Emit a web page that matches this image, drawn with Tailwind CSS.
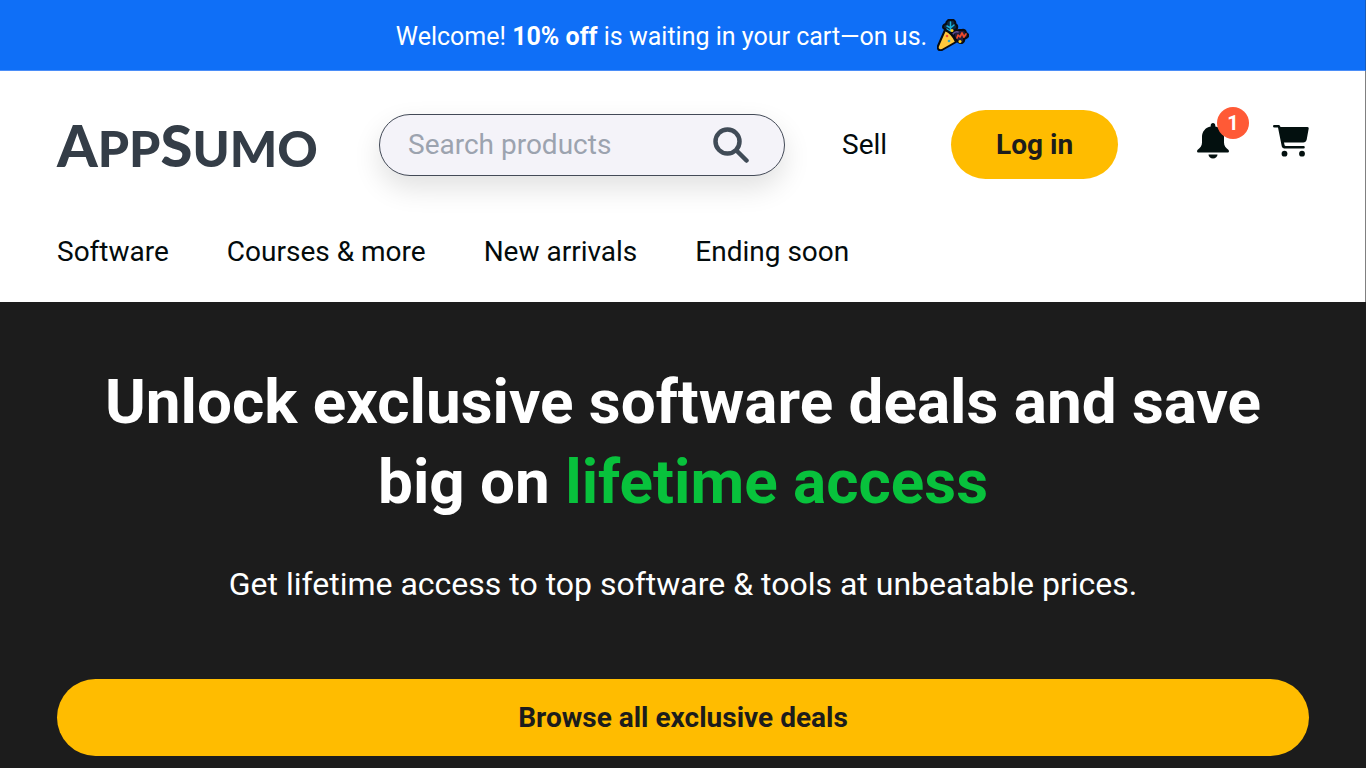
<!DOCTYPE html>
<html lang="en">
	<head>
		<meta charset="UTF-8" />
		<meta name="viewport" content="width=device-width, initial-scale=1" />
		<title>AppSumo</title>
		<script src="https://cdn.jsdelivr.net/npm/@tailwindcss/browser@4"></script>
	</head>
	<body class="min-h-screen overflow-hidden bg-[#1c1c1c] font-['Roboto',sans-serif]">
		<div class="flex h-[71px] items-center justify-center gap-2.5 border-r border-b border-r-[#145bbd] border-b-[#4b8ef8] bg-[#0f6ff7] text-white">
			<p class="pt-1 text-[25px] leading-8">Welcome! <b>10% off</b> is waiting in your cart—on us.</p>
			<svg class="size-8" viewBox="0 0 32 32" fill="none" stroke="#080b12" stroke-width="2" stroke-linejoin="round" stroke-linecap="round" aria-hidden="true">
				<path d="M11 12c0-2-5-1-5-4 0-2 2-3 3-3 0-3 3-5 5-4 3-1 5 2 4 4 3 1 3 5 0 6l-3 3z" fill="#0b2942" />
				<path d="M13.500 3v9M10 7l3.500 2L17 6M10 10l3 2" stroke="#1bb0d8" stroke-width="1.500" />
				<path d="M17 18c-1-4 1-7 5-7l3 0c2-1 4 1 4 3 3 1 3 4 0 5l-2 1c1 4-3 5-6 3z" fill="#25203d" />
				<path d="M16 15q2-3 5-2" stroke="#604d93" stroke-width="1.500" />
				<path d="M20 19l1-3 2 2 2-4 2 4 2-3" stroke="#f04a2c" stroke-width="1.700" />
				<path d="M8 11 1 27c-1 3 1 5 4 4l14-8c-2-5-6-10-11-12Z" fill="#ffc83d" />
				<g stroke="none">
					<circle cx="10" cy="17" r="1.300" fill="#ee5035" />
					<circle cx="12" cy="22" r="1.300" fill="#32a7b8" />
					<circle cx="15" cy="11.500" r="1.500" fill="#ffd21f" />
					<circle cx="23" cy="22.500" r="1.500" fill="#ffd21f" />
				</g>
			</svg>
		</div>

		<header class="border-r border-[#808080] bg-white pt-[39px] pr-14 pb-8 pl-[57px] text-[#030b0c]">
			<div class="flex items-center">
				<a href="#" class="h-[69px] w-[322px] shrink-0 font-['Lato',sans-serif] text-[50px] leading-[69px] font-black text-[#343d47]"><span class="text-[58px]">A</span>PP<span class="text-[58px]">S</span>UMO</a>
				<form class="flex h-[62px] w-[406px] items-center rounded-full border border-[#434a57] bg-[#f4f3f9] pr-[35px] pl-7 shadow-[0_12px_28px_rgba(0,0,0,0.12)]">
					<input type="search" aria-label="Search products" placeholder="Search products" class="min-w-0 flex-1 text-[28px] leading-9 outline-none placeholder:text-[#9ca3af]" />
					<button type="submit" aria-label="Search">
						<svg class="size-9" viewBox="0 0 36 36" fill="none" stroke="#404b57" stroke-width="4.5" stroke-linecap="round">
							<circle cx="14.5" cy="14.5" r="12" />
							<path d="m24 24 9.5 9.5" />
						</svg>
					</button>
				</form>
				<a href="#" class="ml-[57px] text-[28px] leading-9">Sell</a>
				<button type="button" class="ml-16 h-[69px] w-[167px] rounded-full bg-[#ffbc00] text-[28px] font-bold text-[#1c1c1c]">Log in</button>
				<div class="ml-auto flex items-center gap-11 pb-2">
					<button type="button" aria-label="Notifications, 1 new" class="relative">
						<svg class="h-9 w-8" viewBox="0 0 32 36" fill="#03100f">
							<path d="M16 0c-1.400 0-2.300 1-2.300 2.400v1.200C8.300 4.600 5 8.800 5 14v5.500c0 3.200-1.800 5.500-4.300 7.300C-.5 28 0 29.500 1.600 29.500h28.800c1.600 0 2.100-1.500.9-2.700C28.800 25 27 22.700 27 19.500V14c0-5.200-3.300-9.400-8.700-10.400V2.400C18.300 1 17.400 0 16 0Z" />
							<path d="M11.500 31.500h9c0 2.200-1.900 4-4.500 4s-4.500-1.800-4.500-4Z" />
						</svg>
						<span class="absolute -top-4 -right-5 size-8 rounded-full bg-[#ff5a36] text-center text-[20px] leading-8 font-bold text-white">1</span>
					</button>
					<a href="#" aria-label="Cart">
						<svg class="h-8 w-9" viewBox="0 0 36 32" fill="#03100f">
							<path d="M1.500 0h4.200Q7 0 7.500 2h26.700q1.700 0 1.500 1.500l-2 11q-.7 3-3.500 3H11l.6 2.700q.2.800 1.200.8h17.700q1.300 0 1.300 1.200t-1.300 1.200H11q-1.800 0-2.200-1.800L5 2.500H1.500Q0 2.500 0 1.200T1.500 0Z" />
							<circle cx="11.500" cy="28.700" r="2.900" />
							<circle cx="29" cy="28.700" r="2.900" />
						</svg>
					</a>
				</div>
			</div>
			<nav class="mt-[55px] flex gap-[58px] text-[28px] leading-9" aria-label="Main">
				<a href="#">Software</a>
				<a href="#">Courses &amp; more</a>
				<a href="#">New arrivals</a>
				<a href="#">Ending soon</a>
			</nav>
		</header>

		<main class="px-[57px] pt-[60px] text-center text-white">
			<h1 class="text-[62px] leading-20 font-bold">Unlock exclusive software deals and save big on <span class="text-[#08c23c]">lifetime access</span></h1>
			<p class="mt-10 text-[32px] leading-11">Get lifetime access to top software &amp; tools at unbeatable prices.</p>
			<button type="button" class="mt-[73px] h-[77px] w-full rounded-full bg-[#ffbc00] text-[28px] font-bold text-[#1c1c1c]">Browse all exclusive deals</button>
		</main>
	</body>
</html>
